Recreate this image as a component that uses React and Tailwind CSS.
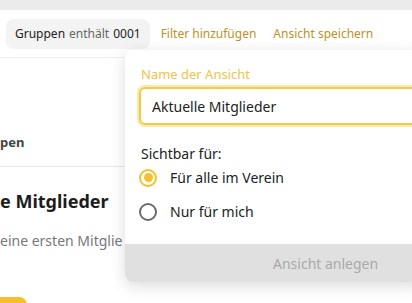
import React from 'react';

export default function App() {
    const [name, setName] = React.useState('Aktuelle Mitglieder');
    const [visibility, setVisibility] = React.useState('all');

    return (
        <div className="relative w-[412px] h-[303px] overflow-hidden bg-white" style={{ fontFamily: '"Noto Sans", "Open Sans", sans-serif' }}>
            {/* top strip */}
            <div className="h-[10px] bg-[#ebebeb]"></div>

            {/* filter bar */}
            <div className="flex items-center gap-[11px] px-[6px] pt-[9px]">
                <div className="h-[30px] px-[9px] rounded-lg bg-[#f3f3f3] flex items-center text-[12px] text-[#222]">
                    Gruppen <span className="text-[#666] mx-[4px]">enthält</span> 0001
                </div>
                <button className="text-[12px] text-[#b8922a]">Filter hinzufügen</button>
                <button className="text-[12px] text-[#b8922a] ml-[6px]">Ansicht speichern</button>
            </div>

            <div className="mt-[8px] border-t border-[#ececec]"></div>

            {/* table header, scrolled */}
            <div className="h-[109px] flex items-end pb-[14px] border-b border-[#e8e8e8]">
                <span className="text-[13px] font-bold text-[#444]">pen</span>
            </div>

            {/* empty state */}
            <div className="pt-[22px]">
                <h2 className="text-[18px] font-bold text-[#1c1c1c] leading-[24px]">e Mitglieder</h2>
                <p className="mt-[17px] text-[14px] text-[#777] whitespace-nowrap">eine ersten Mitglie</p>
                <div className="mt-[46px] w-[27px] h-[30px] rounded-r-lg bg-[#f5c02c]"></div>
            </div>

            {/* save view popover */}
            <div className="absolute left-[125px] top-[50px] w-[300px] rounded-lg bg-white shadow-[0_4px_16px_rgba(0,0,0,0.14)] overflow-hidden">
                <div className="pl-[14px] pt-[15px] pb-[22px]">
                    <label className="block pl-[2px] text-[13px] text-[#f0c24a] leading-[18px]">Name der Ansicht</label>
                    <div className="mt-[4px] h-[38px] rounded-md border-2 border-[#f2c94c] ring-2 ring-[#fbe9a9] flex items-center pl-[11px]">
                        <input
                            value={name}
                            onChange={(e) => setName(e.target.value)}
                            className="w-full bg-transparent outline-none text-[14px] text-[#222] caret-[#222]"
                            style={{ fontFamily: 'inherit' }}
                        />
                    </div>

                    <div className="mt-[19px] pl-[2px] text-[14px] text-[#222] leading-[20px]">Sichtbar für:</div>

                    <div className="mt-[3px] flex flex-col gap-[13px]">
                        <label className="flex items-center gap-[13px] cursor-pointer" onClick={() => setVisibility('all')}>
                            <span className={`w-[18px] h-[18px] rounded-full border-2 flex items-center justify-center ${visibility === 'all' ? 'border-[#f5c02c]' : 'border-[#6b6b6b]'}`}>
                                {visibility === 'all' && <span className="w-[9px] h-[9px] rounded-full bg-[#f5c02c]"></span>}
                            </span>
                            <span className="text-[14px] text-[#222]">Für alle im Verein</span>
                        </label>
                        <label className="flex items-center gap-[13px] cursor-pointer" onClick={() => setVisibility('me')}>
                            <span className={`w-[18px] h-[18px] rounded-full border-2 flex items-center justify-center ${visibility === 'me' ? 'border-[#f5c02c]' : 'border-[#6b6b6b]'}`}>
                                {visibility === 'me' && <span className="w-[9px] h-[9px] rounded-full bg-[#f5c02c]"></span>}
                            </span>
                            <span className="text-[14px] text-[#222]">Nur für mich</span>
                        </label>
                    </div>
                </div>

                <div className="h-[38px] bg-[#e0e0e0] flex items-center">
                    <span className="ml-[148px] text-[14px] text-[#a9a9a9]">Ansicht anlegen</span>
                </div>
            </div>
        </div>
    );
}
